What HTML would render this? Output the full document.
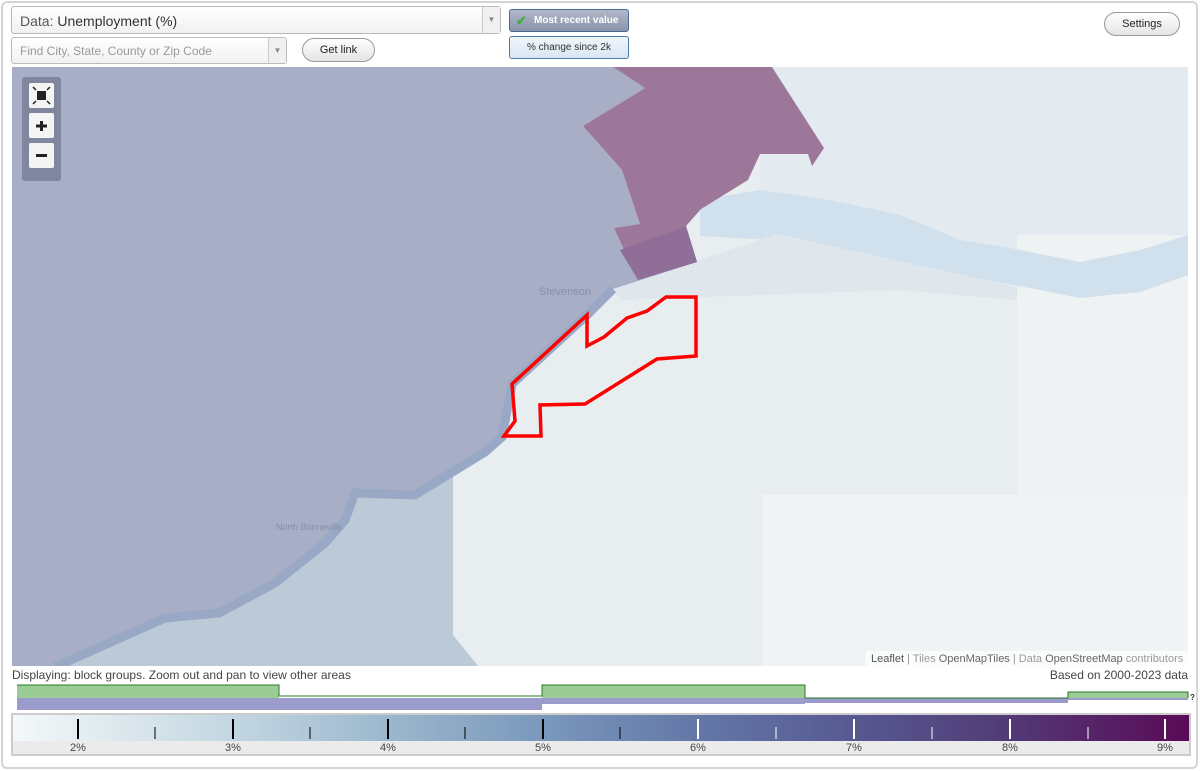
<!DOCTYPE html>
<html><head><meta charset="utf-8"><style>
*{box-sizing:border-box;margin:0;padding:0}
body{width:1200px;height:771px;background:#fff;font-family:"Liberation Sans",Arial,sans-serif;position:relative;overflow:hidden}
.frame{position:absolute;left:1px;top:1px;width:1197px;height:768px;border:2px solid #d4d4d4;border-radius:6px}
.sel{position:absolute;background:linear-gradient(#fff,#f1f1f1);border:1px solid #bbb;border-radius:3px}
.arr{position:absolute;right:0;top:0;bottom:0;width:18px;border-left:1px solid #ccc;background:#f0f0f0;color:#888;font-size:8px;text-align:center}
.btn{position:absolute;border:1px solid #999;border-radius:12px;background:linear-gradient(#fff,#e4e4e4);font-size:11px;color:#222;text-align:center}
.abs{position:absolute}
</style></head><body>
<div class="frame"></div>
<div class="sel" style="left:11px;top:6px;width:490px;height:28px"><span class="abs" style="left:8px;top:6px;font-size:14px;color:#555">Data: <span style="color:#333">Unemployment (%)</span></span><div class="arr" style="line-height:26px">▼</div></div>
<div class="sel" style="left:11px;top:37px;width:276px;height:27px"><span class="abs" style="left:8px;top:6px;font-size:12px;color:#999">Find City, State, County or Zip Code</span><div class="arr" style="line-height:25px">▼</div></div>
<div class="btn" style="left:302px;top:38px;width:73px;height:24px;line-height:22px">Get link</div>
<div class="abs" style="left:509px;top:9px;width:120px;height:23px;border:1px solid #4a6a9a;border-radius:3px;background:linear-gradient(#b0b8c8,#8a94ac);color:#fff;font-size:10px;font-weight:bold;line-height:21px;padding-left:24px"><span class="abs" style="left:6px;top:0;color:#4a4;font-size:13px">✔</span>Most recent value</div>
<div class="abs" style="left:509px;top:36px;width:120px;height:23px;border:1px solid #4a7ab0;border-radius:3px;background:linear-gradient(#f0f6fb,#d8e6f2);color:#333;font-size:10px;line-height:21px;text-align:center">% change since 2k</div>
<div class="btn" style="left:1104px;top:12px;width:76px;height:24px;line-height:22px">Settings</div>

<svg class="abs" style="left:12px;top:67px" width="1176" height="599" viewBox="12 67 1176 599">
<rect x="12" y="67" width="1176" height="599" fill="#e8edf0"/>
<rect x="760" y="67" width="428" height="200" fill="#e3eaf0"/>
<rect x="1017" y="235" width="171" height="260" fill="#eef2f3"/>
<rect x="762" y="495" width="426" height="171" fill="#f1f4f5"/>
<polygon points="700,200 760,190 830,200 900,215 960,240 1010,248 1080,262 1140,250 1188,235 1188,275 1140,292 1080,298 1040,290 960,275 900,268 775,240 700,236" fill="#d0e0ed"/>
<polygon points="613,289 777,234 1017,287 1017,300 900,290 620,300" fill="#dfe7ed"/>
<polygon points="12,667 12,560 453,470 453,635 479,667" fill="#bccad7"/>
<polygon points="12,67 613,67 645,88 583,126 622,170 640,224 614,228 638,280 697,262 613,289 587,315 512,384 502,437 485,452 415,495 355,493 345,520 325,543 275,583 219,613 165,618 55,667 12,667" fill="#a7aec6"/>
<polyline points="613,289 587,315 512,384 502,437 485,452 415,495 355,493 345,520 325,543 275,583 219,613 165,618 55,667" fill="none" stroke="#99a9c5" stroke-width="9"/>
<polygon points="613,67 772,67 824,148 812,166 808,154 760,154 748,180 701,209 686,226 697,262 638,280 614,228 640,224 622,170 583,126 645,88" fill="#9c7799"/>
<polygon points="638,280 697,262 686,226 620,250" fill="#8f6f98"/>
<text x="539" y="295" font-size="11" fill="#8890a8" font-family="Liberation Sans">Stevenson</text>
<text x="276" y="530" font-size="9" fill="#8890a8" font-family="Liberation Sans">North Bonneville</text>
<polygon points="587,315 587,346 604,337 627,318 647,311 666,297 696,297 696,356 657,359 585,404 540,405 541,436 504,436 515,421 512,384" fill="none" stroke="#f00" stroke-width="3.5"/>
<rect x="22" y="77" width="39" height="104" rx="3" fill="#7f869e"/>
<rect x="29" y="83" width="25" height="25" rx="2" fill="#f4f4f4"/>
<rect x="37" y="91" width="9" height="9" fill="#222"/>
<g stroke="#222" stroke-width="1.5" fill="none"><path d="M33,87 l3,3 M50,87 l-3,3 M33,104 l3,-3 M50,104 l-3,-3"/></g>
<rect x="29" y="113" width="25" height="25" rx="2" fill="#f4f4f4"/>
<rect x="29" y="143" width="25" height="25" rx="2" fill="#f4f4f4"/>
<rect x="40" y="121" width="3" height="10" fill="#222"/><rect x="36" y="124.5" width="11" height="3" fill="#222"/>
<rect x="36" y="154" width="11" height="3" fill="#222"/>
<rect x="866" y="651" width="322" height="15" fill="rgba(255,255,255,0.7)"/>
<text x="871" y="662" font-size="11" fill="#999" font-family="Liberation Sans"><tspan fill="#555">Leaflet</tspan> | Tiles <tspan fill="#666">OpenMapTiles</tspan> | Data <tspan fill="#666">OpenStreetMap</tspan> contributors</text>
</svg>

<div class="abs" style="left:12px;top:668px;font-size:12px;color:#444">Displaying: block groups. Zoom out and pan to view other areas</div>
<div class="abs" style="right:12px;top:668px;font-size:12px;color:#444">Based on 2000-2023 data</div>

<svg class="abs" style="left:0;top:680px" width="1200" height="34">
<rect x="17" y="18" width="525" height="12" fill="#9c9ccc"/>
<rect x="542" y="18" width="263" height="6" fill="#9c9ccc"/>
<rect x="805" y="18" width="263" height="5" fill="#9c9ccc"/>
<rect x="1068" y="18" width="120" height="2" fill="#9c9ccc"/>
<rect x="17" y="5" width="262" height="13" fill="#9ccc96"/>
<rect x="542" y="5" width="263" height="13" fill="#9ccc96"/>
<rect x="1068" y="12" width="120" height="6" fill="#9ccc96"/>
<polyline points="17,5 279,5 279,16 542,16 542,5 805,5 805,18 1068,18 1068,12 1188,12 1188,18" fill="none" stroke="#2a7a2a" stroke-width="1"/>
<text x="1190" y="20" font-size="8" font-weight="bold" fill="#333">?</text>
</svg>

<div class="abs" style="left:11px;top:713px;width:1180px;height:43px;border:2px solid #ccc;background:#ebebeb"></div>
<div class="abs" style="left:13px;top:715px;width:1176px;height:26px;background:linear-gradient(90deg,#f4f8f9 0%,#c2d6e1 19%,#9bb7cd 32%,#7a98bc 45%,#6478a8 58%,#575a92 71%,#523c78 84%,#5a0a55 100%)"></div>
<svg class="abs" style="left:0;top:715px" width="1200" height="42">
<g stroke-width="2">
<line x1="78" y1="4" x2="78" y2="24" stroke="#000"/><line x1="233" y1="4" x2="233" y2="24" stroke="#000"/><line x1="388" y1="4" x2="388" y2="24" stroke="#000"/><line x1="543" y1="4" x2="543" y2="24" stroke="#000"/>
<line x1="698" y1="4" x2="698" y2="24" stroke="#fff"/><line x1="854" y1="4" x2="854" y2="24" stroke="#fff"/><line x1="1010" y1="4" x2="1010" y2="24" stroke="#fff"/><line x1="1165" y1="4" x2="1165" y2="24" stroke="#fff"/>
</g><g stroke-width="1">
<line x1="155" y1="12" x2="155" y2="24" stroke="#000"/><line x1="310" y1="12" x2="310" y2="24" stroke="#000"/><line x1="465" y1="12" x2="465" y2="24" stroke="#000"/><line x1="620" y1="12" x2="620" y2="24" stroke="#000"/>
<line x1="776" y1="12" x2="776" y2="24" stroke="#fff"/><line x1="932" y1="12" x2="932" y2="24" stroke="#fff"/><line x1="1088" y1="12" x2="1088" y2="24" stroke="#fff"/>
</g>
<g font-size="11" fill="#444" text-anchor="middle" font-family="Liberation Sans">
<text x="78" y="36">2%</text><text x="233" y="36">3%</text><text x="388" y="36">4%</text><text x="543" y="36">5%</text><text x="698" y="36">6%</text><text x="854" y="36">7%</text><text x="1010" y="36">8%</text><text x="1165" y="36">9%</text>
</g></svg>
</body></html>
